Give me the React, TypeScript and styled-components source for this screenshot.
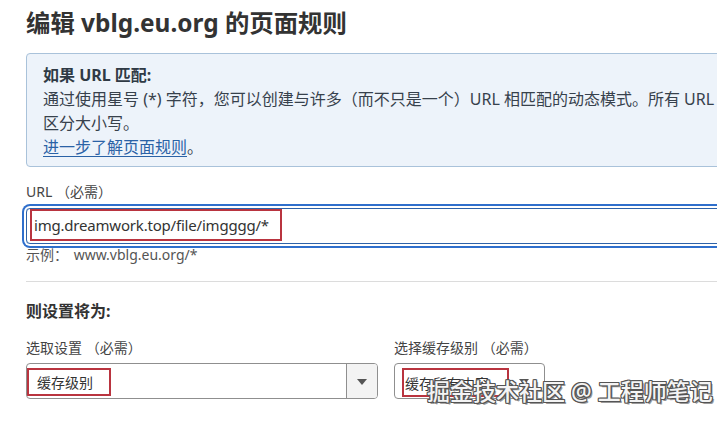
import React from 'react';
import styled, { createGlobalStyle } from 'styled-components';

const GlobalStyle = createGlobalStyle`
    body {
        margin: 0;
        background: #fff;
        overflow: hidden;
        font-family: "Noto Sans", "Noto Sans CJK SC", sans-serif;
        color: #333;
    }
`;

const Page = styled.div`
    position: relative;
    width: 800px;
    height: 421px;
    padding: 8px 0 0 26px;
    box-sizing: border-box;
`;

const Title = styled.h1`
    margin: 0;
    font-size: 24.4px;
    line-height: 30px;
    font-weight: 700;
    color: #333;
`;

// --- Info box ---

const InfoBox = styled.div`
    margin-top: 15px;
    width: 760px;
    border: 1px solid #a9c2da;
    border-radius: 4px;
    background: #edf3fa;
    padding: 9px 17px 7px 16px;
    font-size: 16px;
    line-height: 24px;
    color: #37414c;
    white-space: nowrap;
`;

const InfoHeading = styled.div`
    font-weight: 700;
    color: #2f3a45;
`;

const InfoLink = styled.a`
    color: #2a62a6;
    text-decoration: underline;
    text-underline-offset: 3px;
`;

// --- Form ---

const Label = styled.div<{ gap?: number }>`
    margin-top: ${p => p.gap ?? 0}px;
    font-size: 14px;
    line-height: 20px;
    color: #444;
`;

const UrlInput = styled.div`
    margin-top: 6px;
    height: 36px;
    box-sizing: border-box;
    border: 1px solid #2d62a8;
    border-radius: 4px;
    box-shadow: 0 0 0 2px #fff, 0 0 0 4px #2f6fcc;
    display: flex;
    align-items: flex-start;
    padding-left: 3px;
`;

const Marked = styled.span<{ w: number; h: number; pad: number }>`
    display: inline-flex;
    align-items: center;
    box-sizing: border-box;
    width: ${p => p.w}px;
    height: ${p => p.h}px;
    padding-left: ${p => p.pad}px;
    border: 2px solid #b9343f;
    color: #333;
    white-space: nowrap;
`;

const InputText = styled.span`
    font-size: 15px;
    letter-spacing: -0.2px;
`;

const Hint = styled.div`
    margin-top: 2px;
    font-size: 14px;
    line-height: 18px;
    color: #555;
    word-spacing: 2px;
`;

const Divider = styled.hr`
    margin: 17px 0 0;
    border: none;
    border-top: 1px solid #dcdcdc;
`;

const SectionTitle = styled.div`
    margin-top: 18px;
    font-size: 16px;
    line-height: 22px;
    font-weight: 700;
    color: #333;
`;

const Row = styled.div`
    display: flex;
    gap: 16px;
`;

const Field = styled.div<{ w: number }>`
    width: ${p => p.w}px;
`;

const Select = styled.div`
    margin-top: 5px;
    height: 36px;
    box-sizing: border-box;
    border: 1px solid #8f8f8f;
    border-radius: 4px;
    display: flex;
    align-items: flex-start;
    font-size: 14px;
    overflow: hidden;
`;

const SelectValue = styled.div<{ inset: number }>`
    flex: 1;
    padding: 4px 0 0 ${p => p.inset}px;
`;

const ArrowBox = styled.div<{ split?: boolean }>`
    width: 30px;
    height: 100%;
    display: flex;
    align-items: center;
    justify-content: center;
    border-left: ${p => (p.split ? '1px solid #8f8f8f' : 'none')};
    background: ${p => (p.split ? '#f3f3f3' : 'transparent')};
    margin-right: ${p => (p.split ? 0 : 6)}px;
`;

const Caret = styled.span`
    width: 0;
    height: 0;
    border-left: 5px solid transparent;
    border-right: 5px solid transparent;
    border-top: 6px solid #555;
    margin-top: 2px;
`;

// --- Watermark ---

const Watermark = styled.div`
    position: absolute;
    left: 427px;
    top: 376px;
    font-size: 23px;
    line-height: 30px;
    font-weight: 500;
    color: #f4f4f4;
    white-space: nowrap;
    text-shadow:
        -1px 0 #555, 1px 0 #555, 0 -1px #555, 0 1px #555,
        -1px -1px #555, 1px 1px #555, -1px 1px #555, 1px -1px #555,
        2px 2px #999;
`;

const App: React.FC = () => {
    return (
        <>
            <GlobalStyle />
            <Page>
                <Title>编辑 vblg.eu.org 的页面规则</Title>

                <InfoBox>
                    <InfoHeading>如果 URL 匹配:</InfoHeading>
                    <div>通过使用星号 (*) 字符，您可以创建与许多（而不只是一个）URL 相匹配的动态模式。所有 URL</div>
                    <div>区分大小写。</div>
                    <div>
                        <InfoLink>进一步了解页面规则</InfoLink>。
                    </div>
                </InfoBox>

                <Label gap={15}>URL （必需）</Label>
                <UrlInput>
                    <Marked w={252} h={32} pad={2}>
                        <InputText>img.dreamwork.top/file/imgggg/*</InputText>
                    </Marked>
                </UrlInput>
                <Hint>示例： www.vblg.eu.org/*</Hint>

                <Divider />

                <SectionTitle>则设置将为:</SectionTitle>

                <Row>
                    <Field w={352}>
                        <Label gap={16}>选取设置 （必需）</Label>
                        <Select>
                            <SelectValue inset={0}>
                                <Marked w={84} h={28} pad={8}>缓存级别</Marked>
                            </SelectValue>
                            <ArrowBox split>
                                <Caret />
                            </ArrowBox>
                        </Select>
                    </Field>
                    <Field w={151}>
                        <Label gap={16}>选择缓存级别 （必需）</Label>
                        <Select>
                            <SelectValue inset={7}>
                                <Marked w={107} h={29} pad={1}>缓存所有内容</Marked>
                            </SelectValue>
                            <ArrowBox>
                                <Caret />
                            </ArrowBox>
                        </Select>
                    </Field>
                </Row>

                <Watermark>掘金技术社区 @ 工程师笔记</Watermark>
            </Page>
        </>
    );
};

export default App;
